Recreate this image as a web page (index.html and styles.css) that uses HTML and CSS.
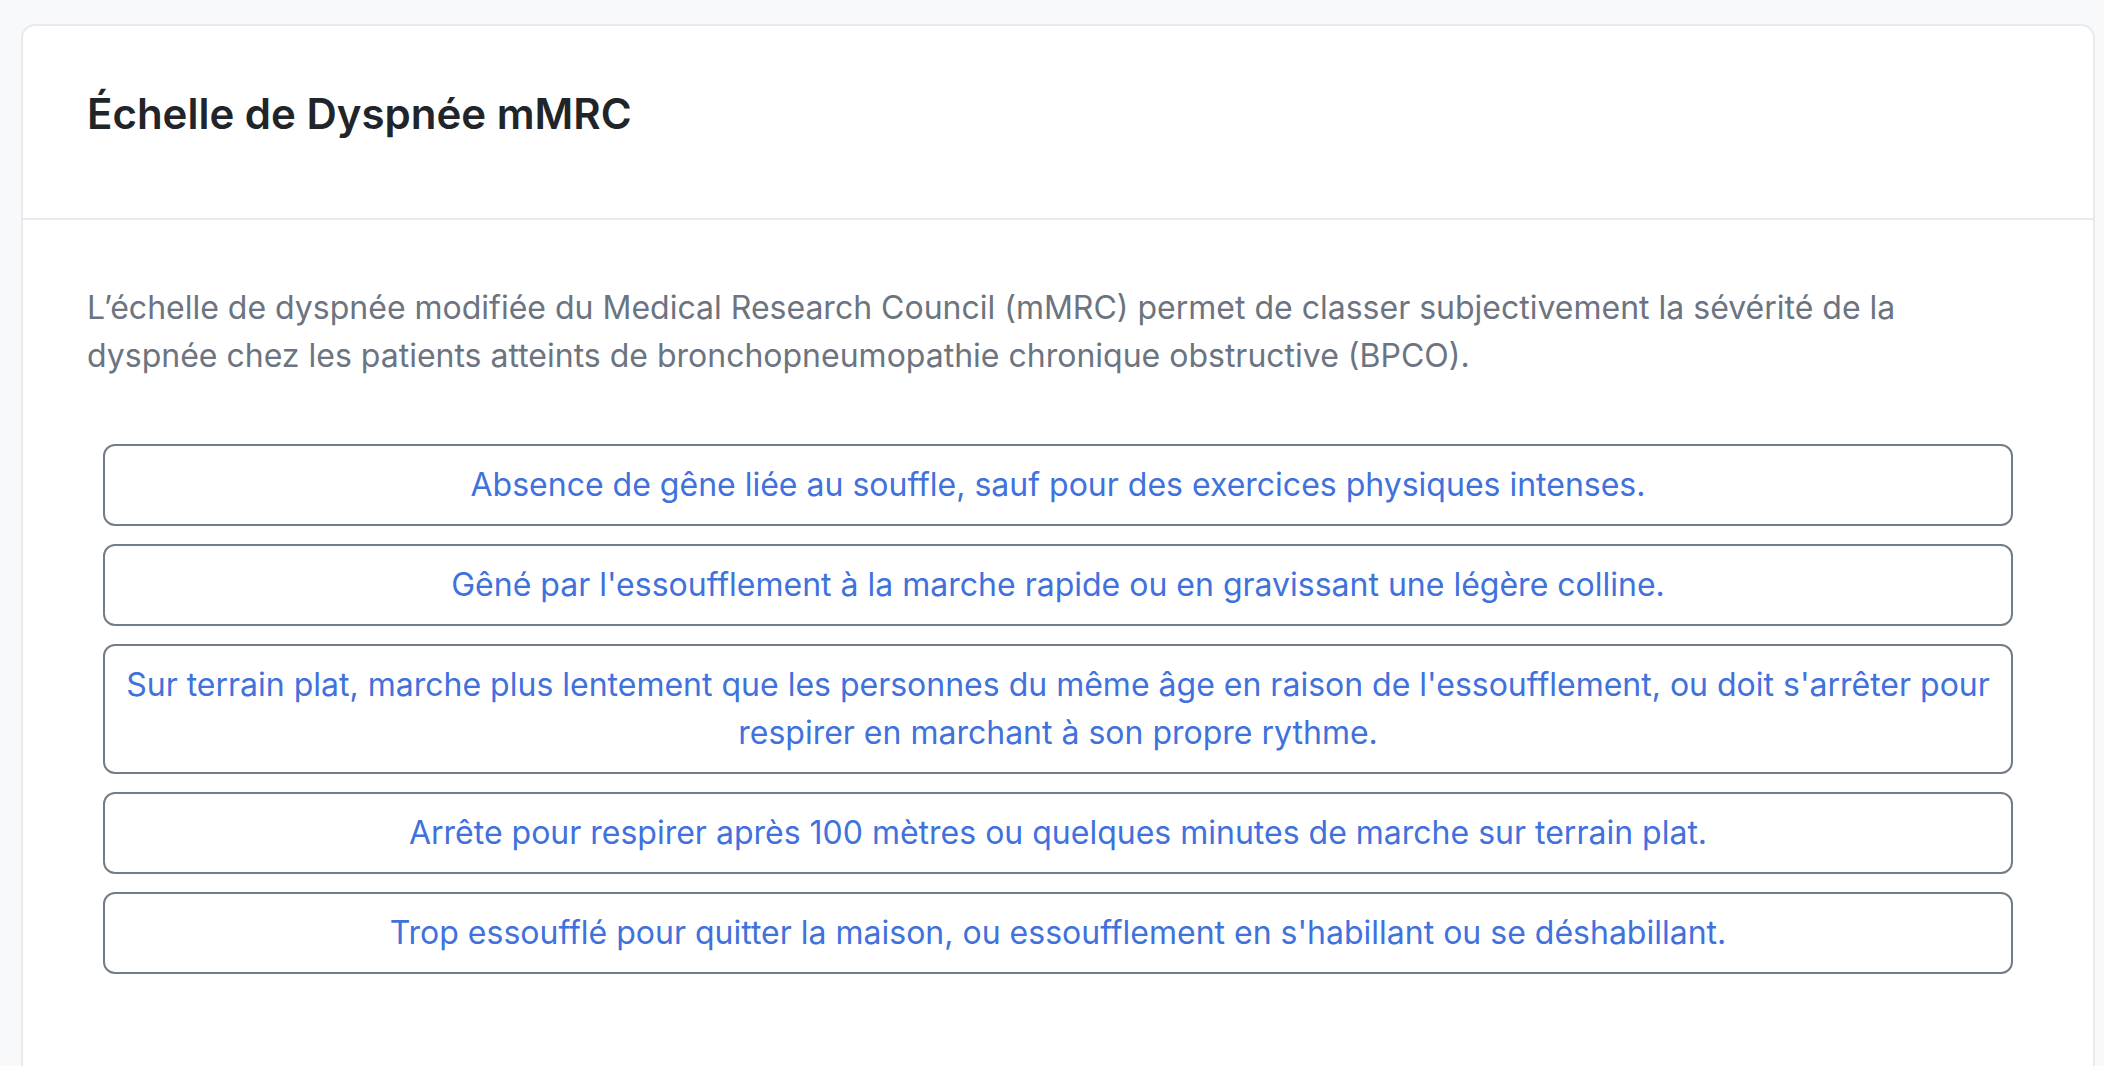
FILE: index.html
```html
<!DOCTYPE html>
<html lang="fr">
<head>
<meta charset="utf-8">
<title>Échelle de Dyspnée mMRC</title>
<link rel="stylesheet" href="styles.css">
</head>
<body>
<div class="card">
  <div class="card-header">
    <h1 class="card-title">Échelle de Dyspnée mMRC</h1>
  </div>
  <div class="card-body">
    <p class="intro">L’échelle de dyspnée modifiée du Medical Research Council (mMRC) permet de classer subjectivement la sévérité de la dyspnée chez les patients atteints de bronchopneumopathie chronique obstructive (BPCO).</p>
    <div class="options">
      <button class="option">Absence de gêne liée au souffle, sauf pour des exercices physiques intenses.</button>
      <button class="option">Gêné par l'essoufflement à la marche rapide ou en gravissant une légère colline.</button>
      <button class="option">Sur terrain plat, marche plus lentement que les personnes du même âge en raison de l'essoufflement, ou doit s'arrêter pour respirer en marchant à son propre rythme.</button>
      <button class="option">Arrête pour respirer après 100 mètres ou quelques minutes de marche sur terrain plat.</button>
      <button class="option">Trop essoufflé pour quitter la maison, ou essoufflement en s'habillant ou se déshabillant.</button>
    </div>
  </div>
</div>
</body>
</html>
```

FILE: styles.css
```css
html, body {
  margin: 0;
  background: #f8f9fa;
}
body {
  padding: 24px 9px 0 21px;
  font-family: Inter, "Noto Sans", sans-serif;
}
.card {
  background: #ffffff;
  border: 2px solid #e8eaed;
  border-radius: 14px;
}
.card-header {
  padding: 64px 64px 64px;
  border-bottom: 2px solid #e8eaed;
}
.card-title {
  margin: 0 0 16px;
  font-size: 42px;
  line-height: 48px;
  font-weight: 600;
  color: #212529;
}
.card-body {
  padding: 64px 64px 160px;
}
.intro {
  margin: 0 0 64px;
  font-size: 32px;
  line-height: 48px;
  color: #6b7480;
}
.options {
  display: flex;
  flex-direction: column;
  gap: 18px;
  margin: 0 16px;
}
.option {
  display: block;
  width: 100%;
  background: #ffffff;
  border: 2px solid #737d88;
  border-radius: 12px;
  padding: 15px 16px;
  font-family: inherit;
  font-size: 32px;
  line-height: 48px;
  color: #4071dc;
  text-align: center;
}
```
